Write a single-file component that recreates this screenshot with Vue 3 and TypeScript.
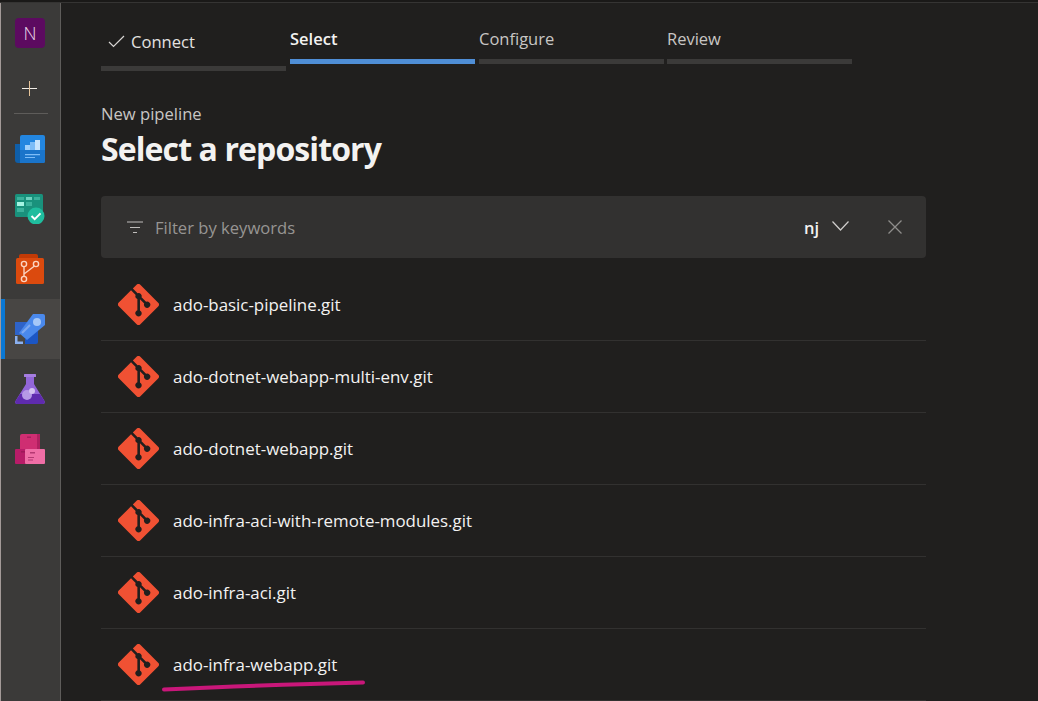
<template>
  <div class="page">
    <div class="topline"></div>
    <div class="shell">
      <nav class="sidebar">
        <div class="org"><span class="org-badge">N</span></div>
        <div class="add">
          <svg width="15" height="15" viewBox="0 0 15 15">
            <path d="M0 7.500h15" stroke="#f0ece6" stroke-width="1" fill="none" />
            <path d="M7.500 0v15" stroke="#e6c49a" stroke-width="1" fill="none" />
          </svg>
        </div>
        <div class="divider"></div>

        <div class="nav-item">
          <svg width="30" height="30" viewBox="0 0 30 30">
            <path d="M0 10h6v19H3a3 3 0 0 1-3-3z" fill="#0f5ea8" />
            <rect x="5" y="1" width="25" height="28" rx="2" fill="#2386e0" />
            <path d="M5 16h25v11a2 2 0 0 1-2 2H5z" fill="#1a74ca" />
            <path d="M10 11h5v5h-5z" fill="#9fd0fb" />
            <path d="M15 8h5v8h-5z" fill="#7dbcf7" />
            <path d="M20 6h5v10h-5z" fill="#c9e4fd" />
            <path d="M10 20h15v1.200H10zM10 23h10v1H10z" fill="#7dbcf7" />
          </svg>
        </div>
        <div class="nav-item">
          <svg width="30" height="30" viewBox="0 0 30 30">
            <rect x="0" y="0" width="28" height="23" rx="1.500" fill="#19917c" />
            <path d="M2 3h7v3H2zM19 3h6v3h-6zM11 8h6v4h-6zM2 14h7v4H2z" fill="#3bb19b" />
            <path d="M11 3h6v3h-6z" fill="#6fd2bf" />
            <path d="M2 8h7v4H2z" fill="#a4f3e2" />
            <circle cx="21" cy="22" r="8.500" fill="#1fbd9e" />
            <path d="M16.500 22l3.200 3.200 5.800-5.800" stroke="#fff" stroke-width="2" fill="none" />
          </svg>
        </div>
        <div class="nav-item">
          <svg width="30" height="30" viewBox="0 0 30 30">
            <path d="M4 5V2a2 2 0 0 1 2-2h15a2 2 0 0 1 2 2v3z" fill="#c23a06" />
            <rect x="1" y="4" width="28" height="26" rx="1.500" fill="#db4a0e" />
            <g fill="none" stroke="#fbd3c0" stroke-width="1.400">
              <circle cx="9" cy="10" r="2.600" />
              <circle cx="9" cy="25" r="2.600" />
              <circle cx="21" cy="10" r="2.600" />
              <path d="M9 12.600v9.800M9 20l10.500-8" />
            </g>
          </svg>
        </div>
        <div class="nav-item selected">
          <svg width="30" height="30" viewBox="0 0 30 30">
            <path d="M0 8h14L5 21H0z" fill="#2e63c9" />
            <path d="M10 30v-5l13-9v12a2 2 0 0 1-2 2z" fill="#1c56c4" />
            <path d="M18 0h10a2 2 0 0 1 2 2v9L12 26l-8-7z" fill="#4a89ec" />
            <circle cx="22" cy="8" r="4" fill="#a6c8f8" />
            <path d="M7 19l8-8" stroke="#7fa9ef" stroke-width="2.200" fill="none" />
            <path d="M0 22h2.500v5.500H8V30H0z" fill="#8ab0f0" />
          </svg>
        </div>
        <div class="nav-item">
          <svg width="30" height="30" viewBox="0 0 30 30">
            <rect x="9" y="0" width="12" height="3" rx=".5" fill="#a57de0" />
            <path d="M11 3h8v7l10.500 17a2 2 0 0 1-2 3H2.500a2 2 0 0 1-2-3L11 10z" fill="#9266d8" />
            <path d="M5 20h20l4.500 7a2 2 0 0 1-2 3H2.500a2 2 0 0 1-2-3z" fill="#5f2bae" />
            <circle cx="12" cy="21" r="5" fill="#b69ae6" />
            <circle cx="17" cy="17" r="3" fill="#d4c2f1" />
          </svg>
        </div>
        <div class="nav-item">
          <svg width="30" height="30" viewBox="0 0 30 30">
            <path d="M5 2a2 2 0 0 1 2-2h16a2 2 0 0 1 2 2v15H5z" fill="#cf2e72" />
            <rect x="22" y="0" width="3" height="15" fill="#b02060" />
            <rect x="0" y="15" width="11" height="15" rx="1" fill="#b81c68" />
            <rect x="10" y="15" width="20" height="15" rx="1" fill="#f06ea6" />
            <path d="M12 2.500h4v1.500h-4zM6 17h4v1.500H6zM15 18h5v1.500h-5zM13 23h6v1h-6zM13 25.500h5v1h-5z" fill="#8e1550" opacity=".6" />
          </svg>
        </div>
      </nav>

      <main class="content">
        <div class="steps">
          <div v-for="step in steps" :key="step.label" class="step" :class="{ done: step.done, active: step.active }">
            <div class="step-label">
              <svg v-if="step.done" class="check" width="17" height="13" viewBox="0 0 17 13"><path d="M1 7l4.500 4.500L16 1" stroke="#d8d6d4" stroke-width="1.200" fill="none" /></svg>
              {{ step.label }}
            </div>
            <div class="step-bar"></div>
          </div>
        </div>

        <div class="crumb">New pipeline</div>
        <h1 class="title">Select a repository</h1>

        <div class="filter">
          <svg class="filter-icon" width="16" height="12" viewBox="0 0 16 12"><path d="M0 1h16M3 6.500h10M6 11.500h4" stroke="#c0bebc" stroke-width="1.100" fill="none" /></svg>
          <span class="filter-text">Filter by keywords</span>
          <span class="filter-value">nj</span>
          <svg class="chevron" width="17" height="10" viewBox="0 0 17 10"><path d="M.5 .5l8 8.500 8-8.500" stroke="#d0cecc" stroke-width="1.200" fill="none" /></svg>
          <svg class="close" width="14" height="14" viewBox="0 0 14 14"><path d="M.5 .5l13 13M13.500 .5l-13 13" stroke="#8f8d8b" stroke-width="1.300" fill="none" /></svg>
        </div>

        <ul class="repos">
          <li v-for="repo in repos" :key="repo" class="repo">
            <svg class="git" width="41" height="41" viewBox="0 0 92 92">
              <path fill="#f05133" d="M90.156 41.965 50.036 1.848a5.918 5.918 0 0 0-8.372 0l-8.328 8.332 10.566 10.566a7.03 7.03 0 0 1 7.23 1.684 7.034 7.034 0 0 1 1.669 7.277l10.187 10.184a7.028 7.028 0 0 1 7.278 1.672 7.04 7.04 0 0 1 0 9.957 7.05 7.05 0 0 1-9.965 0 7.044 7.044 0 0 1-1.528-7.66l-9.5-9.497V59.36a7.04 7.04 0 0 1 1.86 11.29 7.04 7.04 0 0 1-9.957 0 7.04 7.04 0 0 1 0-9.958 7.06 7.06 0 0 1 2.304-1.539V33.926a7.049 7.049 0 0 1-3.82-9.234L29.242 14.272 1.730 41.777a5.925 5.925 0 0 0 0 8.371L41.852 90.270a5.925 5.925 0 0 0 8.370 0l39.934-39.934a5.925 5.925 0 0 0 0-8.371" />
            </svg>
            <span class="repo-name">{{ repo }}</span>
          </li>
        </ul>

        <!-- hand drawn marker under the last repo -->
        <svg class="marker" width="206" height="16" viewBox="0 0 206 16"><path d="M3 11.500C60 9 140 6 202 4.500" stroke="#c9177a" stroke-width="4" stroke-linecap="round" fill="none" /></svg>
      </main>
    </div>
  </div>
</template>

<script setup lang="ts">
interface Step {
  label: string;
  done?: boolean;
  active?: boolean;
}

const steps: Step[] = [
  { label: 'Connect', done: true },
  { label: 'Select', active: true },
  { label: 'Configure' },
  { label: 'Review' },
];

const repos: string[] = [
  'ado-basic-pipeline.git',
  'ado-dotnet-webapp-multi-env.git',
  'ado-dotnet-webapp.git',
  'ado-infra-aci-with-remote-modules.git',
  'ado-infra-aci.git',
  'ado-infra-webapp.git',
];
</script>

<style>
html,
body {
  margin: 0;
  background: #201f1e;
  overflow: hidden;
}
</style>

<style scoped>
.page {
  width: 1038px;
  height: 701px;
  display: flex;
  flex-direction: column;
  overflow: hidden;
  background: #201f1e;
  font-family: "Open Sans", "Noto Sans", sans-serif;
}

.topline {
  height: 3px;
  flex: none;
  background: #1a1918;
  border-bottom: 1px solid #353433;
  box-sizing: border-box;
}

.shell {
  flex: 1;
  display: flex;
  min-height: 0;
}

.sidebar {
  width: 61px;
  flex: none;
  box-sizing: border-box;
  background: #3b3a39;
  border-left: 1px solid #a39a98;
  border-right: 1px solid #5e5c5a;
}

.org {
  height: 60px;
  padding-top: 15px;
  box-sizing: border-box;
  padding-left: 14px;
}

.org-badge {
  display: flex;
  align-items: center;
  justify-content: center;
  width: 30px;
  height: 30px;
  border-radius: 4px;
  background: #5c0a60;
  color: #eadcea;
  font-size: 18px;
  font-weight: 300;
}

.add {
  height: 50px;
  display: flex;
  align-items: center;
  justify-content: center;
  padding-right: 2px;
}

.divider {
  height: 1px;
  margin: 0 12px 0 13px;
  background: #5e5c5a;
}

.nav-item {
  height: 60px;
  display: flex;
  align-items: center;
  padding-left: 14px;
  box-sizing: border-box;
}

.divider + .nav-item {
  margin-top: 5px;
}

.nav-item.selected {
  background: #484644;
  box-shadow: inset 4px 0 0 #0a78d4;
}

.content {
  flex: 1;
  position: relative;
  padding: 0 0 0 40px;
  min-width: 0;
}

.steps {
  display: flex;
  gap: 4px;
  height: 68px;
}

.step {
  width: 185px;
  height: 61px;
  display: flex;
  flex-direction: column;
  justify-content: flex-end;
}

.step.done {
  height: 68px;
}

.step + .step + .step + .step {
  margin-left: -1px;
}

.step-label {
  display: flex;
  align-items: center;
  height: 24px;
  margin-bottom: 9px;
  color: #c8c6c4;
  font-size: 16.500px;
}

.step.done .step-label {
  color: #e4e2e0;
  padding-left: 7px;
  margin-bottom: 13px;
  font-size: 16.600px;
}

.step.active .step-label {
  color: #f3f2f1;
  font-weight: 600;
}

.check {
  margin-right: 6px;
}

.step-bar {
  height: 5px;
  background: #3b3a39;
}

.step.active .step-bar {
  background: #4f8ed6;
}

.crumb {
  margin-top: 32px;
  height: 22px;
  line-height: 22px;
  color: #c8c6c4;
  font-size: 16.600px;
}

.title {
  margin: 2px 0 0;
  height: 44px;
  line-height: 44px;
  color: #f3f2f1;
  font-size: 32px;
  font-weight: 700;
  letter-spacing: -0.9px;
}

.filter {
  margin-top: 25px;
  width: 825px;
  height: 62px;
  display: flex;
  align-items: center;
  box-sizing: border-box;
  padding: 0 24px 0 26px;
  border-radius: 4px;
  background: #323130;
}

.filter-icon {
  flex: none;
  margin-right: 12px;
}

.filter-text {
  flex: 1;
  color: #979593;
  font-size: 16.600px;
}

.filter-value {
  color: #f3f2f1;
  font-size: 16.500px;
  font-weight: 600;
}

.chevron {
  margin-left: 13px;
  margin-top: -2px;
}

.close {
  margin-left: 39px;
}

.repos {
  list-style: none;
  margin: 11px 0 0;
  padding: 0;
  width: 825px;
}

.repo {
  height: 72px;
  display: flex;
  align-items: center;
  box-sizing: border-box;
  padding-left: 17px;
  border-bottom: 1px solid #323130;
}

.git {
  flex: none;
  margin-right: 14px;
}

.repo-name {
  color: #f3f2f1;
  font-size: 16.900px;
}

.marker {
  position: absolute;
  left: 100px;
  top: 675px;
}
</style>
